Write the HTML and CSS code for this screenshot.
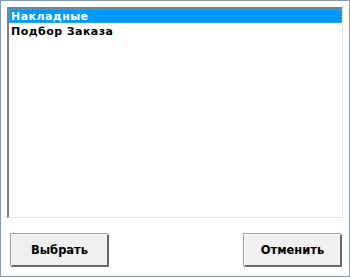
FILE: index.html
```html
<!DOCTYPE html>
<html lang="ru">
<head>
    <meta charset="UTF-8">
    <title>Выбор</title>
    <link rel="stylesheet" href="styles.css">
</head>
<body>
    <div class="dialog">
        <!-- List -->
        <ul class="list">
            <li class="selected"><span>Накладные</span></li>
            <li><span>Подбор Заказа</span></li>
        </ul>

        <!-- Buttons -->
        <div class="buttons">
            <button class="btn">Выбрать</button>
            <button class="btn">Отменить</button>
        </div>
    </div>
</body>
</html>
```

FILE: styles.css
```css
html, body {
    margin: 0;
    padding: 0;
}

body {
    font-family: "DejaVu Sans", sans-serif;
    font-size: 11px;
    font-weight: bold;
    background: #ffffff;
}

.dialog {
    width: 350px;
    height: 277px;
    border: 1px solid #7f9db9;
    background: #ffffff;
    padding: 6px;
    box-sizing: border-box;
    display: flex;
    flex-direction: column;
}

.list {
    list-style: none;
    margin: 0;
    padding: 0;
    height: 211px;
    border-top: 2px solid #808080;
    border-left: 2px solid #808080;
    border-right: 1px solid #e3e3e3;
    border-bottom: 1px solid #e3e3e3;
    box-sizing: border-box;
    background: #ffffff;
}

.list li {
    height: 14px;
    line-height: 16px;
    padding-left: 2px;
    letter-spacing: 0.45px;
    color: #000000;
}

.list li + li {
    line-height: 17px;
}

.list li.selected {
    background: #0099ff;
    color: #ffffff;
    outline: 1px dotted #ff8000;
    outline-offset: -1px;
}

.buttons {
    display: flex;
    justify-content: space-between;
    padding: 16px 1px 0 4px;
}

.btn {
    width: 98px;
    height: 33px;
    font-family: "DejaVu Sans", sans-serif;
    font-size: 11.5px;
    font-weight: bold;
    background: #f0f0f0;
    border-top: 1px solid #ffffff;
    border-left: 1px solid #ffffff;
    border-right: 2px solid #696969;
    border-bottom: 2px solid #696969;
    box-shadow: -1px -1px 0 #a0a0a0;
    padding: 0;
    color: #000000;
}
```
